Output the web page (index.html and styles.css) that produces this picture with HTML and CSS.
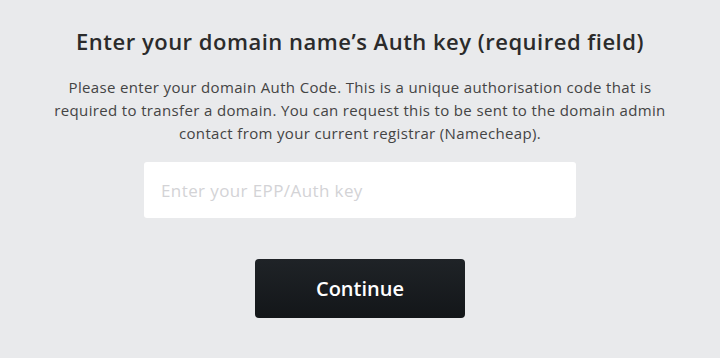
FILE: index.html
```html
<!DOCTYPE html>
<html lang="en">
<head>
    <meta charset="UTF-8">
    <meta name="viewport" content="width=device-width, initial-scale=1.0">
    <title>Auth key</title>
    <link rel="stylesheet" href="styles.css">
</head>
<body>
    <div class="auth-step">
        <h2 class="auth-title">Enter your domain name’s Auth key (required field)</h2>
        <p class="auth-text">Please enter your domain Auth Code. This is a unique authorisation code that is required to transfer a domain. You can request this to be sent to the domain admin contact from your current registrar (Namecheap).</p>
        <input type="text" class="auth-input" placeholder="Enter your EPP/Auth key">
        <button class="btn-continue">Continue</button>
    </div>
</body>
</html>
```

FILE: styles.css
```css
body {
    margin: 0;
    background: #e9eaec;
    font-family: "Open Sans", Lato, sans-serif;
    color: #2d2d2d;
}
.auth-step {
    display: flex;
    flex-direction: column;
    align-items: center;
    padding-top: 26px;
}
.auth-title {
    margin: 0;
    font-size: 22px;
    font-weight: 600;
    line-height: 30px;
    letter-spacing: 0.5px;
    color: #2b2b2b;
}
.auth-text {
    margin: 20px 0 0;
    width: 620px;
    text-align: center;
    font-size: 15px;
    line-height: 23px;
    letter-spacing: 0.35px;
    color: #444;
}
.auth-input {
    margin-top: 17px;
    width: 432px;
    height: 56px;
    box-sizing: border-box;
    border: none;
    border-radius: 3px;
    background: #fff;
    padding: 0 17px;
    font-family: inherit;
    font-size: 17px;
    letter-spacing: 0.4px;
    outline: none;
}
.auth-input::placeholder {
    color: #d3d3d6;
}
.btn-continue {
    margin-top: 41px;
    width: 210px;
    height: 59px;
    border: none;
    border-radius: 4px;
    background: linear-gradient(#1f2327, #131619);
    color: #fff;
    font-family: inherit;
    font-size: 20px;
    font-weight: 600;
    cursor: pointer;
}
```
